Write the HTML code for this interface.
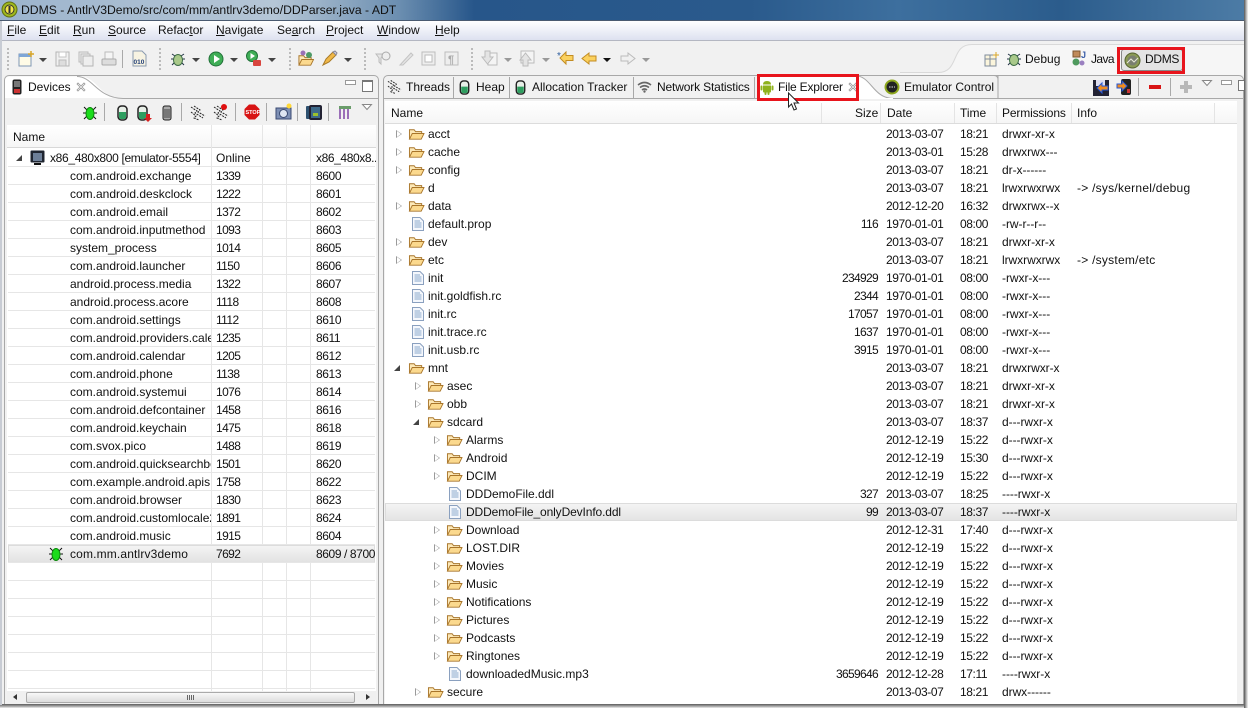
<!DOCTYPE html>
<html><head><meta charset="utf-8"><style>
html,body{margin:0;padding:0;width:1248px;height:708px;overflow:hidden;background:#f0f0f0}
body{font:12px/18px "Liberation Sans",sans-serif;color:#111;position:relative}
div,span,svg,i{position:absolute}
svg{overflow:visible}
u{text-decoration:underline}
.r{left:0;width:1248px;height:18px}
.r span{white-space:nowrap}
.r svg[width="17"]{top:3px;transform:scale(.94)}
.n{left:70px}.o2{left:216px;letter-spacing:-.6px}.o3{left:316px;letter-spacing:-.4px;width:60px;overflow:hidden}
.fn{left:428px}.s{right:370px;letter-spacing:-.67px}.d{left:886px;letter-spacing:-.4px}.t{left:960px;letter-spacing:-.4px}.p{left:1002px;letter-spacing:-.05px}.f{left:1077px;letter-spacing:.25px}
.g{background:#e6e6e6;height:1px;left:8px;width:367px}
.v{background:#e6e6e6;width:1px;top:149px;height:541px}
.sep{background:#a9a9a9;width:1px}
.hs{background:#e4e4e4;width:1px;top:103px;height:20px}
.m{top:21px;line-height:19px;font-size:12px;white-space:nowrap}
.dd{width:0;height:0;border:4px solid transparent;border-top:4px solid #444;border-bottom:0;top:58px}
.dg{border-top-color:#999}
.grip{width:2px;height:22px;top:48px;background:repeating-linear-gradient(#bbb 0 2px,transparent 2px 4px)}
.tb{top:78px;line-height:18px;white-space:nowrap}
.ts{background:#a8a8a8;width:1px;top:77px;height:21px}
.rb{border:3px solid #e8141c;box-sizing:border-box}
.ar{width:0;height:0;top:5px;margin-left:1px;border-left:6px solid #9a9a9a;border-top:4.5px solid transparent;border-bottom:4.5px solid transparent}
.ar::after{content:"";position:absolute;left:-5px;top:-3px;width:0;height:0;border-left:4px solid #fff;border-top:3px solid transparent;border-bottom:3px solid transparent}
.ex{width:0;height:0;top:6px;border-right:6px solid #444;border-top:6px solid transparent}
</style></head><body>
<svg width="0" height="0" style="left:0;top:0"><defs>
<symbol id="fo" viewBox="0 0 17 14"><path d="M1 12V2.500h5l1.500 2H14v2.500" fill="#fde9b8" stroke="#a8752a"/><path d="M1 12.500L4 6.500H16.500L13.500 12.500Z" fill="#fbd98e" stroke="#a8752a"/></symbol>
<symbol id="fi" viewBox="0 0 12 14"><path d="M.5.500H8L11.500 4V13.500H.5Z" fill="#f4f7fc" stroke="#8aa0bf"/><path d="M2.500 4H8M2.500 6H9.500M2.500 8H9.500M2.500 10H9.500" stroke="#8aa8cc"/></symbol>
<symbol id="cy" viewBox="0 0 11 16"><rect x="1" y="1" width="9" height="14" rx="3.500" fill="#e8efe8" stroke="#222" stroke-width="1.500"/><path d="M2 7H9V12Q9 14 7 14H4Q2 14 2 12Z" fill="#2f9e60"/></symbol>
<symbol id="bug" viewBox="0 0 16 16"><path d="M2 2L5 5M14 2L11 5M1 8H4M12 8H15M2 14L5 11M14 14L11 11" stroke="#111"/><ellipse cx="8" cy="8.500" rx="4" ry="6" fill="#1bdc1b" stroke="#0a860a"/></symbol>
<symbol id="dbug" viewBox="0 0 16 16"><path d="M2 3L5 5M14 3L11 5M1 8H4M12 8H15M2 14L5 11M14 14L11 11" stroke="#234"/><ellipse cx="8" cy="9" rx="4.500" ry="5.500" fill="#a9c98a" stroke="#3c6b45"/></symbol>
<symbol id="th" viewBox="0 0 16 16"><path d="M1 2L7 6 5 8 13 13M4 1L10 5 8 7 15 11M1 7L6 11 4 13 9 15" fill="none" stroke="#222" stroke-dasharray="2 1"/></symbol>
<symbol id="and" viewBox="0 0 16 16"><path d="M4 5.500Q4 2 8 2T12 5.500ZM4 6.500H12V12.500Q12 13.500 11 13.500H5Q4 13.500 4 12.500Z" fill="#8fb21c"/><rect x="1.500" y="6.500" width="2" height="5" rx="1" fill="#8fb21c"/><rect x="12.500" y="6.500" width="2" height="5" rx="1" fill="#8fb21c"/><rect x="5.500" y="12" width="2" height="4" rx="1" fill="#8fb21c"/><rect x="8.500" y="12" width="2" height="4" rx="1" fill="#8fb21c"/></symbol>
<symbol id="x" viewBox="0 0 10 10"><path d="M1 2L2 1 5 4 8 1 9 2 6 5 9 8 8 9 5 6 2 9 1 8 4 5Z" fill="#fff" stroke="#999" stroke-width=".8"/></symbol>
</defs></svg>

<!-- title -->
<div style="left:0;top:0;width:1248px;height:20px;background:linear-gradient(90deg,#9cb4cd 0,#b5c6d6 22%,#6b8eb0 32%,#27568a 38%,#2a5a8c 60%,#3d6f9e 72%,#2b5c8c 85%,#4d7ca6 100%)"></div>
<div style="left:0;top:20px;width:1248px;height:1px;background:#4a5a70"></div>
<svg style="left:1px;top:1px" width="17" height="17"><circle cx="8.500" cy="8.500" r="7.500" fill="#9fb81d" stroke="#5f6e10"/><circle cx="8.500" cy="8.500" r="4.500" fill="#f4e64a" stroke="#333"/><rect x="7.500" y="5" width="2" height="7" fill="#333"/></svg>
<div style="left:21px;top:1px;line-height:18px;font-size:12.200px;color:#111;white-space:nowrap">DDMS - AntlrV3Demo/src/com/mm/antlrv3demo/DDParser.java - ADT</div>

<!-- menu -->
<div style="left:0;top:21px;width:1248px;height:20px;background:linear-gradient(#fff,#dde1f0);border-bottom:1px solid #b4b7c2;box-sizing:border-box"></div>
<span class="m" style="left:7px"><u>F</u>ile</span><span class="m" style="left:39px"><u>E</u>dit</span><span class="m" style="left:73px"><u>R</u>un</span><span class="m" style="left:108px"><u>S</u>ource</span><span class="m" style="left:158px">Refac<u>t</u>or</span><span class="m" style="left:216px"><u>N</u>avigate</span><span class="m" style="left:277px">Se<u>a</u>rch</span><span class="m" style="left:326px"><u>P</u>roject</span><span class="m" style="left:377px"><u>W</u>indow</span><span class="m" style="left:435px"><u>H</u>elp</span>

<!-- toolbar -->
<div style="left:0;top:41px;width:1248px;height:34px;background:#f1f1f1"></div>
<div class="grip" style="left:7px"></div><div class="grip" style="left:159px"></div><div class="grip" style="left:289px"></div><div class="grip" style="left:364px"></div><div class="grip" style="left:471px"></div>
<svg style="left:18px;top:51px" width="16" height="16"><rect x="1" y="3" width="12" height="12" fill="#fffbe6" stroke="#7f97b5"/><rect x="1" y="3" width="12" height="3" fill="#7fa6d6"/><path d="M13 0V6M10 3H16" stroke="#d8a528" stroke-width="1.500"/></svg>
<i class="dd" style="left:39px"></i>
<svg style="left:55px;top:51px" width="16" height="16"><rect x="1" y="1" width="13" height="14" fill="#f1f1f1" stroke="#b5b5b5"/><rect x="4" y="1" width="7" height="5" fill="#fff" stroke="#c4c4c4"/><rect x="4" y="9" width="7" height="6" fill="#ddd" stroke="#bbb"/></svg>
<svg style="left:78px;top:51px" width="16" height="16"><rect x="1" y="1" width="9" height="10" fill="#eee" stroke="#bbb"/><rect x="3" y="3" width="9" height="10" fill="#eee" stroke="#bbb"/><rect x="5" y="5" width="10" height="10" fill="#eee" stroke="#b5b5b5"/></svg>
<svg style="left:101px;top:51px" width="16" height="16"><rect x="4" y="1" width="8" height="7" fill="#f5f5f5" stroke="#bbb"/><rect x="1" y="8" width="14" height="6" rx="1" fill="#ddd" stroke="#aaa"/></svg>
<div class="sep" style="left:122px;top:50px;height:18px"></div>
<svg style="left:132px;top:50px" width="15" height="17"><path d="M1 1H10L14 5V16H1Z" fill="#f7f3e2" stroke="#8b9bb0"/><text x="1.500" y="14" font-family="Liberation Sans" font-size="6.500" font-weight="bold" fill="#23407a">010</text></svg>
<svg style="left:170px;top:51px" width="16" height="16"><use href="#dbug"/></svg><i class="dd" style="left:192px"></i>
<svg style="left:208px;top:51px" width="16" height="16"><circle cx="8" cy="8" r="7" fill="#3fae56" stroke="#217038"/><path d="M6 4L12 8 6 12Z" fill="#fff"/></svg><i class="dd" style="left:230px"></i>
<svg style="left:246px;top:50px" width="16" height="17"><circle cx="6" cy="6" r="5.500" fill="#3fae56" stroke="#217038"/><path d="M4.500 3L9 6 4.500 9Z" fill="#fff"/><rect x="7" y="10" width="8" height="6" rx="1" fill="#d8453e"/></svg><i class="dd" style="left:268px"></i>
<svg style="left:298px;top:50px" width="16" height="17"><use href="#fo" y="3" width="16" height="14"/><circle cx="5" cy="3" r="2.500" fill="#9a72b8"/><circle cx="11" cy="5" r="3" fill="#4d9a66"/></svg>
<svg style="left:322px;top:50px" width="16" height="17"><path d="M1 15L4 9 11 2 14 5 7 12Z" fill="#f0b848" stroke="#a87a28"/><path d="M11 2L14 5 15 3 13 1Z" fill="#d8d8e8" stroke="#889"/></svg><i class="dd" style="left:344px"></i>
<svg style="left:375px;top:50px" width="18" height="17"><path d="M1 4H9L6 8V14L4 12V8Z" fill="#e6e6e6" stroke="#bbb"/><circle cx="11" cy="6" r="4" fill="#eee" stroke="#aaa"/></svg>
<svg style="left:398px;top:50px" width="16" height="17"><path d="M2 15L13 3 15 5 5 15Z" fill="#e4e4e4" stroke="#c4c4c4"/></svg>
<svg style="left:421px;top:51px" width="15" height="16"><rect x="1" y="1" width="13" height="13" fill="#eee" stroke="#bdbdbd"/><rect x="4" y="4" width="7" height="7" fill="#fff" stroke="#bbb"/></svg>
<svg style="left:444px;top:51px" width="15" height="16"><rect x="1" y="1" width="13" height="13" fill="#eee" stroke="#bdbdbd"/><text x="4" y="12" font-family="Liberation Sans" font-size="11" font-weight="bold" fill="#aaa">¶</text></svg>
<svg style="left:482px;top:50px" width="17" height="17"><rect x="6" y="3" width="9" height="12" fill="#f4f4f4" stroke="#bbb"/><path d="M3 1H8V7H11L5.500 14 0 7H3Z" fill="#e4e4e4" stroke="#bbb"/></svg><i class="dd dg" style="left:504px"></i>
<svg style="left:520px;top:50px" width="17" height="17"><rect x="1" y="1" width="13" height="12" fill="#f4f4f4" stroke="#bbb"/><path d="M3 16V10H0L5.500 3 11 10H8V16Z" fill="#e4e4e4" stroke="#bbb"/></svg><i class="dd dg" style="left:542px"></i>
<svg style="left:557px;top:51px" width="17" height="14"><path d="M16 4.500H9V1L3 7 9 13V9.500H16Z" fill="#fbd15e" stroke="#c28c22"/><text x="0" y="8" font-family="Liberation Sans" font-size="10" fill="#2f5e9e">*</text></svg>
<svg style="left:581px;top:52px" width="16" height="14"><path d="M15 4H8V1L1 6.500 8 12V9H15Z" fill="#fbd15e" stroke="#c28c22"/></svg><i class="dd" style="left:603px;border-top-color:#111"></i>
<svg style="left:620px;top:52px" width="16" height="14"><path d="M1 4H8V1L15 6.500 8 12V9H1Z" fill="#f0f0f0" stroke="#bbb"/></svg><i class="dd dg" style="left:642px"></i>

<!-- perspective -->
<svg style="left:900px;top:41px" width="348" height="34"><path d="M0 32H38C60 32 50 4 72 4H348V34H0Z" fill="#f6f6f6" stroke="none"/><path d="M0 31.500H38C60 31.500 50 3.500 72 3.500H348" fill="none" stroke="#d9d9d9"/></svg>
<svg style="left:984px;top:52px" width="15" height="15"><rect x="1" y="3" width="11" height="11" fill="#fbf5dc" stroke="#7f8c9c"/><path d="M1 7H12M6 3V14" stroke="#7f8c9c"/><path d="M12 0V6M9 3H15" stroke="#d8a528"/></svg>
<svg style="left:1006px;top:51px" width="16" height="16"><use href="#dbug"/></svg>
<span class="m" style="left:1025px;top:50px">Debug</span>
<svg style="left:1071px;top:50px" width="17" height="17"><rect x="2" y="1" width="7" height="6" fill="#c08a5a" stroke="#7d5530"/><circle cx="5" cy="12" r="3.500" fill="#4f9a5e"/><circle cx="11" cy="13" r="2.500" fill="#9a80c0"/><text x="10" y="8" font-family="Liberation Sans" font-size="9" font-weight="bold" fill="#3c5fa8">J</text></svg>
<span class="m" style="left:1091px;top:50px;letter-spacing:-.6px">Java</span>
<div style="left:1121px;top:49px;width:62px;height:22px;box-sizing:border-box;background:#e4e4e4;border:1px solid #888;border-radius:3px"></div>
<svg style="left:1124px;top:52px" width="17" height="17"><circle cx="8.500" cy="8.500" r="7.500" fill="#8a9a55" stroke="#55622e"/><circle cx="8.500" cy="8.500" r="5" fill="#7a7f70"/><path d="M3 11L7 7 10 10 14 6" stroke="#e8e8d8" fill="none"/></svg>
<span class="m" style="left:1145px;top:50px;letter-spacing:-.3px">DDMS</span>
<div class="rb" style="left:1117px;top:47px;width:68px;height:27px"></div>

<!-- left pane -->
<div style="left:4px;top:75px;width:375px;height:630px;box-sizing:border-box;border:1px solid #a8a8a8;border-radius:5px 5px 0 0;background:#f1f1f1"></div>
<svg style="left:5px;top:76px" width="373" height="24"><path d="M0 22H116C95 22 92 .5 75 .5H5Q0 .5 0 5Z" fill="#fff"/><path d="M72 .5C88 .5 92 22 118 22.500H373" fill="none" stroke="#a8a8a8"/></svg>
<svg style="left:12px;top:79px" width="10" height="16"><rect x=".5" y=".5" width="9" height="15" rx="2" fill="#222"/><rect x="2" y="2" width="6" height="6" fill="#777"/><rect x="2" y="10" width="6" height="4" fill="#c33"/></svg>
<span class="tb" style="left:28px;">Devices</span>
<svg style="left:76px;top:82px" width="10" height="10"><use href="#x"/></svg>
<div style="left:345px;top:80px;width:9px;height:3px;border:1px solid #999;background:#fff"></div>
<div style="left:362px;top:80px;width:9px;height:9px;border:1px solid #777;border-top-width:2px;background:#fff"></div>

<svg style="left:82px;top:105px" width="16" height="16"><use href="#bug"/></svg>
<div class="sep" style="left:104px;top:103px;height:18px"></div>
<svg style="left:117px;top:105px" width="11" height="16"><use href="#cy"/></svg>
<svg style="left:137px;top:105px" width="16" height="17"><use href="#cy" width="11" height="16"/><path d="M9 9H13V13H15L11 17 7 13H9Z" fill="#d81f1f"/></svg>
<svg style="left:162px;top:105px" width="10" height="16"><rect x="1" y="1" width="8" height="14" rx="2" fill="#aaa" stroke="#222"/><path d="M3 4V13M5 4V13M7 4V13" stroke="#444"/></svg>
<div class="sep" style="left:181px;top:103px;height:18px"></div>
<svg style="left:190px;top:105px" width="16" height="16"><use href="#th"/></svg>
<svg style="left:213px;top:103px" width="16" height="18"><use href="#th" y="2" width="16" height="16"/><circle cx="11" cy="4" r="3" fill="#e01010"/></svg>
<div class="sep" style="left:235px;top:103px;height:18px"></div>
<svg style="left:244px;top:104px" width="16" height="16"><path d="M5 .5H11L15.500 5V11L11 15.500H5L.5 11V5Z" fill="#d81414"/><text x="1.500" y="10" font-family="Liberation Sans" font-size="5.500" font-weight="bold" fill="#fff">STOP</text></svg>
<div class="sep" style="left:266px;top:103px;height:18px"></div>
<svg style="left:275px;top:103px" width="17" height="17"><rect x="1" y="5" width="15" height="11" fill="#7d8fb4" stroke="#3a4a72"/><circle cx="8.500" cy="10.500" r="4" fill="#dfe6f2" stroke="#3a4a72"/><circle cx="14" cy="3" r="2.500" fill="#ffd838"/></svg>
<div class="sep" style="left:297px;top:103px;height:18px"></div>
<svg style="left:306px;top:104px" width="16" height="16"><rect x="0" y="2" width="5" height="13" rx="1" fill="#2e5170"/><rect x="3" y="1" width="13" height="15" rx="2" fill="#223"/><rect x="5" y="3" width="9" height="11" fill="#3e6a8a"/><path d="M7 12V9H12V12Z" fill="#9cc22c"/></svg>
<div class="sep" style="left:328px;top:103px;height:18px"></div>
<svg style="left:338px;top:105px" width="14" height="14"><path d="M1 1H13V4H1Z" fill="#6a9c6a"/><path d="M2 4V14M6 4V14M10 4V14" stroke="#9b6fb8" stroke-width="2"/></svg>
<svg style="left:362px;top:104px" width="11" height="7"><path d="M.5.500H9.500L5 5.500Z" fill="#fff" stroke="#888"/></svg>

<!-- device table -->
<div style="left:7px;top:125px;width:369px;height:566px;background:#fff"></div>
<div style="left:7px;top:125px;width:369px;height:23px;background:linear-gradient(#fff,#f6f6f6);border-bottom:1px solid #d8d8d8;box-sizing:border-box"></div>
<span style="left:13px;top:128px">Name</span>
<div class="v" style="left:211px;top:125px;height:566px"></div><div class="v" style="left:262px;top:125px;height:566px"></div><div class="v" style="left:286px;top:125px;height:566px"></div><div class="v" style="left:310px;top:125px;height:566px"></div>
<div style="left:8px;top:545px;width:367px;height:18px;background:linear-gradient(#f4f4f4,#e2e2e2);border:1px solid #dcdcdc;box-sizing:border-box"></div>
<div class="g" style="top:166px"></div><div class="g" style="top:184px"></div><div class="g" style="top:202px"></div><div class="g" style="top:220px"></div><div class="g" style="top:238px"></div><div class="g" style="top:256px"></div><div class="g" style="top:274px"></div><div class="g" style="top:292px"></div><div class="g" style="top:310px"></div><div class="g" style="top:328px"></div><div class="g" style="top:346px"></div><div class="g" style="top:364px"></div><div class="g" style="top:382px"></div><div class="g" style="top:400px"></div><div class="g" style="top:418px"></div><div class="g" style="top:436px"></div><div class="g" style="top:454px"></div><div class="g" style="top:472px"></div><div class="g" style="top:490px"></div><div class="g" style="top:508px"></div><div class="g" style="top:526px"></div><div class="g" style="top:544px"></div><div class="g" style="top:562px"></div><div class="g" style="top:580px"></div><div class="g" style="top:598px"></div><div class="g" style="top:616px"></div><div class="g" style="top:634px"></div><div class="g" style="top:652px"></div><div class="g" style="top:670px"></div><div class="g" style="top:688px"></div>

<div class="r" style="top:149px"><i class="ex" style="left:16px"></i><svg style="left:30px;top:1px" width="15" height="16"><rect x=".5" y=".5" width="14" height="12" rx="1" fill="#1f2530"/><rect x="3" y="3" width="9" height="8" fill="#6d7f98"/><rect x="4" y="13" width="7" height="2" fill="#111"/></svg><span style="left:50px;letter-spacing:-.33px">x86_480x800 [emulator-5554]</span><span class="o2" style="letter-spacing:0">Online</span><span class="o3">x86_480x8...</span></div>
<div class="r" style="top:167px"><span class="n">com.android.exchange</span><span class="o2">1339</span><span class="o3">8600</span></div>
<div class="r" style="top:185px"><span class="n">com.android.deskclock</span><span class="o2">1222</span><span class="o3">8601</span></div>
<div class="r" style="top:203px"><span class="n">com.android.email</span><span class="o2">1372</span><span class="o3">8602</span></div>
<div class="r" style="top:221px"><span class="n" style="width:141px;overflow:hidden">com.android.inputmethod</span><span class="o2">1093</span><span class="o3">8603</span></div>
<div class="r" style="top:239px"><span class="n">system_process</span><span class="o2">1014</span><span class="o3">8605</span></div>
<div class="r" style="top:257px"><span class="n">com.android.launcher</span><span class="o2">1150</span><span class="o3">8606</span></div>
<div class="r" style="top:275px"><span class="n">android.process.media</span><span class="o2">1322</span><span class="o3">8607</span></div>
<div class="r" style="top:293px"><span class="n">android.process.acore</span><span class="o2">1118</span><span class="o3">8608</span></div>
<div class="r" style="top:311px"><span class="n">com.android.settings</span><span class="o2">1112</span><span class="o3">8610</span></div>
<div class="r" style="top:329px"><span class="n" style="width:141px;overflow:hidden">com.android.providers.calendar</span><span class="o2">1235</span><span class="o3">8611</span></div>
<div class="r" style="top:347px"><span class="n">com.android.calendar</span><span class="o2">1205</span><span class="o3">8612</span></div>
<div class="r" style="top:365px"><span class="n">com.android.phone</span><span class="o2">1138</span><span class="o3">8613</span></div>
<div class="r" style="top:383px"><span class="n">com.android.systemui</span><span class="o2">1076</span><span class="o3">8614</span></div>
<div class="r" style="top:401px"><span class="n" style="width:141px;overflow:hidden">com.android.defcontainer</span><span class="o2">1458</span><span class="o3">8616</span></div>
<div class="r" style="top:419px"><span class="n">com.android.keychain</span><span class="o2">1475</span><span class="o3">8618</span></div>
<div class="r" style="top:437px"><span class="n">com.svox.pico</span><span class="o2">1488</span><span class="o3">8619</span></div>
<div class="r" style="top:455px"><span class="n" style="width:141px;overflow:hidden">com.android.quicksearchbox</span><span class="o2">1501</span><span class="o3">8620</span></div>
<div class="r" style="top:473px"><span class="n" style="width:141px;overflow:hidden">com.example.android.apis</span><span class="o2">1758</span><span class="o3">8622</span></div>
<div class="r" style="top:491px"><span class="n">com.android.browser</span><span class="o2">1830</span><span class="o3">8623</span></div>
<div class="r" style="top:509px"><span class="n" style="width:141px;overflow:hidden">com.android.customlocale2</span><span class="o2">1891</span><span class="o3">8624</span></div>
<div class="r" style="top:527px"><span class="n">com.android.music</span><span class="o2">1915</span><span class="o3">8604</span></div>
<div class="r" style="top:545px"><svg style="left:48px;top:1px" width="16" height="16"><use href="#bug"/></svg><span class="n" style="letter-spacing:.15px">com.mm.antlrv3demo</span><span class="o2">7692</span><span class="o3">8609 / 8700</span></div>

<!-- left scrollbar -->
<div style="left:7px;top:691px;width:369px;height:13px;background:#f0f0f0"></div>
<div style="left:26px;top:692px;width:329px;height:11px;box-sizing:border-box;border:1px solid #aaa;border-radius:2px;background:linear-gradient(#f8f8f8,#dcdcdc)"></div>
<div style="left:187px;top:695px;width:7px;height:5px;background:repeating-linear-gradient(90deg,#666 0 1px,transparent 1px 2px)"></div>
<div style="left:13px;top:694px;width:0;height:0;border:3px solid transparent;border-right:4px solid #333;border-left:0"></div>
<div style="left:366px;top:694px;width:0;height:0;border:3px solid transparent;border-left:4px solid #333;border-right:0"></div>

<!-- right pane -->
<div style="left:383px;top:75px;width:861px;height:630px;box-sizing:border-box;border:1px solid #a8a8a8;border-radius:5px 5px 0 0;background:#f1f1f1"></div>
<svg style="left:754px;top:75px" width="265" height="25"><path d="M3 0H100C118 0 118 23 136 23H3Z" fill="#fff"/><path d="M100 .5C118 .5 118 23.500 140 23.500H244V23" fill="none" stroke="#a8a8a8"/><path d="M244 5Q244 .5 240 .5H115" fill="none" stroke="#a8a8a8"/><path d="M244 .5V23" stroke="#a8a8a8"/></svg>
<div style="left:384px;top:98px;width:859px;height:1px;background:#a8a8a8"></div>
<div style="left:757px;top:98px;width:136px;height:1px;background:#fff"></div>
<div class="ts" style="left:453px"></div><div class="ts" style="left:509px"></div><div class="ts" style="left:633px"></div><div class="ts" style="left:754px"></div>
<svg style="left:387px;top:79px" width="15" height="16"><use href="#th"/></svg><span class="tb" style="left:406px">Threads</span>
<svg style="left:459px;top:80px" width="11" height="15"><use href="#cy"/></svg><span class="tb" style="left:476px">Heap</span>
<svg style="left:515px;top:80px" width="11" height="15"><use href="#cy"/></svg><span class="tb" style="left:532px">Allocation Tracker</span>
<svg style="left:637px;top:81px" width="15" height="12"><path d="M1 4Q7.500-1 14 4M3 6.500Q7.500 3 12 6.500M5 9Q7.500 7 10 9" stroke="#666" stroke-width="1.600" fill="none"/><circle cx="7.500" cy="10.500" r="1.200" fill="#666"/></svg><span class="tb" style="left:657px;letter-spacing:-.15px">Network Statistics</span>
<svg style="left:759px;top:79px" width="16" height="16"><use href="#and"/></svg><span class="tb" style="left:778px;letter-spacing:-.2px">File Explorer</span>
<svg style="left:848px;top:82px" width="10" height="10"><use href="#x"/></svg>
<svg style="left:884px;top:79px" width="16" height="16"><circle cx="8" cy="8" r="7.500" fill="#8fa81e"/><circle cx="8" cy="8" r="5.500" fill="#222"/><path d="M5 8H11" stroke="#ddd" stroke-dasharray="1.500 1"/></svg><span class="tb" style="left:904px">Emulator Control</span>

<svg style="left:1093px;top:80px" width="16" height="16"><rect x="0" y="0" width="16" height="16" fill="#223"/><rect x="3" y="0" width="9" height="6" fill="#dde"/><path d="M15 6H9V3L4 8 9 13V10H15Z" fill="#f28c1c" stroke="#2356d8"/></svg>
<svg style="left:1116px;top:79px" width="15" height="17"><rect x="5" y="0" width="10" height="16" rx="2" fill="#222"/><rect x="11" y="10" width="3" height="4" fill="#c33"/><path d="M1 5H6V2L11 7 6 12V9H1Z" fill="#f28c1c" stroke="#2356d8"/></svg>
<div class="sep" style="left:1138px;top:78px;height:18px"></div>
<div style="left:1149px;top:85px;width:12px;height:4px;background:#d81414"></div>
<div class="sep" style="left:1170px;top:78px;height:18px"></div>
<svg style="left:1180px;top:81px" width="12" height="12"><path d="M4 0H8V4H12V8H8V12H4V8H0V4H4Z" fill="#b8b8b8"/></svg>
<svg style="left:1202px;top:80px" width="11" height="7"><path d="M.5.500H9.500L5 5.500Z" fill="#fff" stroke="#888"/></svg>
<div style="left:1221px;top:80px;width:9px;height:3px;border:1px solid #999;background:#fff"></div>
<div style="left:1238px;top:80px;width:5px;height:9px;border:1px solid #777;border-right:0;background:#fff"></div>

<!-- file table -->
<div style="left:385px;top:101px;width:852px;height:603px;background:#fff"></div>
<div style="left:385px;top:101px;width:852px;height:23px;background:linear-gradient(#fff,#f6f6f6);border-bottom:1px solid #dcdcdc;box-sizing:border-box"></div>
<div class="hs" style="left:821px"></div><div class="hs" style="left:880px"></div><div class="hs" style="left:954px"></div><div class="hs" style="left:996px"></div><div class="hs" style="left:1071px"></div><div class="hs" style="left:1214px"></div>
<span style="left:391px;top:104px">Name</span><span style="left:855px;top:104px">Size</span><span style="left:887px;top:104px">Date</span><span style="left:960px;top:104px">Time</span><span style="left:1002px;top:104px;letter-spacing:-.15px">Permissions</span><span style="left:1077px;top:104px">Info</span>
<div style="left:385px;top:503px;width:852px;height:18px;background:linear-gradient(#f4f4f4,#e4e4e4);border:1px solid #dcdcdc;box-sizing:border-box"></div>

<div class="r" style="top:125px"><i class="ar" style="left:395px"></i><svg style="left:408px;top:2px" width="17" height="14"><use href="#fo"/></svg><span class="fn">acct</span><span class="d">2013-03-07</span><span class="t">18:21</span><span class="p">drwxr-xr-x</span></div>
<div class="r" style="top:143px"><i class="ar" style="left:395px"></i><svg style="left:408px;top:2px" width="17" height="14"><use href="#fo"/></svg><span class="fn">cache</span><span class="d">2013-03-01</span><span class="t">15:28</span><span class="p">drwxrwx---</span></div>
<div class="r" style="top:161px"><i class="ar" style="left:395px"></i><svg style="left:408px;top:2px" width="17" height="14"><use href="#fo"/></svg><span class="fn">config</span><span class="d">2013-03-07</span><span class="t">18:21</span><span class="p">dr-x------</span></div>
<div class="r" style="top:179px"><svg style="left:408px;top:2px" width="17" height="14"><use href="#fo"/></svg><span class="fn">d</span><span class="d">2013-03-07</span><span class="t">18:21</span><span class="p">lrwxrwxrwx</span><span class="f">-&gt; /sys/kernel/debug</span></div>
<div class="r" style="top:197px"><i class="ar" style="left:395px"></i><svg style="left:408px;top:2px" width="17" height="14"><use href="#fo"/></svg><span class="fn">data</span><span class="d">2012-12-20</span><span class="t">16:32</span><span class="p">drwxrwx--x</span></div>
<div class="r" style="top:215px"><svg style="left:412px;top:2px" width="12" height="14"><use href="#fi"/></svg><span class="fn">default.prop</span><span class="s">116</span><span class="d">1970-01-01</span><span class="t">08:00</span><span class="p">-rw-r--r--</span></div>
<div class="r" style="top:233px"><i class="ar" style="left:395px"></i><svg style="left:408px;top:2px" width="17" height="14"><use href="#fo"/></svg><span class="fn">dev</span><span class="d">2013-03-07</span><span class="t">18:21</span><span class="p">drwxr-xr-x</span></div>
<div class="r" style="top:251px"><i class="ar" style="left:395px"></i><svg style="left:408px;top:2px" width="17" height="14"><use href="#fo"/></svg><span class="fn">etc</span><span class="d">2013-03-07</span><span class="t">18:21</span><span class="p">lrwxrwxrwx</span><span class="f">-&gt; /system/etc</span></div>
<div class="r" style="top:269px"><svg style="left:412px;top:2px" width="12" height="14"><use href="#fi"/></svg><span class="fn">init</span><span class="s">234929</span><span class="d">1970-01-01</span><span class="t">08:00</span><span class="p">-rwxr-x---</span></div>
<div class="r" style="top:287px"><svg style="left:412px;top:2px" width="12" height="14"><use href="#fi"/></svg><span class="fn">init.goldfish.rc</span><span class="s">2344</span><span class="d">1970-01-01</span><span class="t">08:00</span><span class="p">-rwxr-x---</span></div>
<div class="r" style="top:305px"><svg style="left:412px;top:2px" width="12" height="14"><use href="#fi"/></svg><span class="fn">init.rc</span><span class="s">17057</span><span class="d">1970-01-01</span><span class="t">08:00</span><span class="p">-rwxr-x---</span></div>
<div class="r" style="top:323px"><svg style="left:412px;top:2px" width="12" height="14"><use href="#fi"/></svg><span class="fn">init.trace.rc</span><span class="s">1637</span><span class="d">1970-01-01</span><span class="t">08:00</span><span class="p">-rwxr-x---</span></div>
<div class="r" style="top:341px"><svg style="left:412px;top:2px" width="12" height="14"><use href="#fi"/></svg><span class="fn">init.usb.rc</span><span class="s">3915</span><span class="d">1970-01-01</span><span class="t">08:00</span><span class="p">-rwxr-x---</span></div>
<div class="r" style="top:359px"><i class="ex" style="left:394px"></i><svg style="left:408px;top:2px" width="17" height="14"><use href="#fo"/></svg><span class="fn">mnt</span><span class="d">2013-03-07</span><span class="t">18:21</span><span class="p">drwxrwxr-x</span></div>
<div class="r" style="top:377px"><i class="ar" style="left:414px"></i><svg style="left:427px;top:2px" width="17" height="14"><use href="#fo"/></svg><span style="left:447px">asec</span><span class="d">2013-03-07</span><span class="t">18:21</span><span class="p">drwxr-xr-x</span></div>
<div class="r" style="top:395px"><i class="ar" style="left:414px"></i><svg style="left:427px;top:2px" width="17" height="14"><use href="#fo"/></svg><span style="left:447px">obb</span><span class="d">2013-03-07</span><span class="t">18:21</span><span class="p">drwxr-xr-x</span></div>
<div class="r" style="top:413px"><i class="ex" style="left:413px"></i><svg style="left:427px;top:2px" width="17" height="14"><use href="#fo"/></svg><span style="left:447px">sdcard</span><span class="d">2013-03-07</span><span class="t">18:37</span><span class="p">d---rwxr-x</span></div>
<div class="r" style="top:431px"><i class="ar" style="left:433px"></i><svg style="left:446px;top:2px" width="17" height="14"><use href="#fo"/></svg><span style="left:466px">Alarms</span><span class="d">2012-12-19</span><span class="t">15:22</span><span class="p">d---rwxr-x</span></div>
<div class="r" style="top:449px"><i class="ar" style="left:433px"></i><svg style="left:446px;top:2px" width="17" height="14"><use href="#fo"/></svg><span style="left:466px">Android</span><span class="d">2012-12-19</span><span class="t">15:30</span><span class="p">d---rwxr-x</span></div>
<div class="r" style="top:467px"><i class="ar" style="left:433px"></i><svg style="left:446px;top:2px" width="17" height="14"><use href="#fo"/></svg><span style="left:466px">DCIM</span><span class="d">2012-12-19</span><span class="t">15:22</span><span class="p">d---rwxr-x</span></div>
<div class="r" style="top:485px"><svg style="left:449px;top:2px" width="12" height="14"><use href="#fi"/></svg><span style="left:466px">DDDemoFile.ddl</span><span class="s">327</span><span class="d">2013-03-07</span><span class="t">18:25</span><span class="p">----rwxr-x</span></div>
<div class="r" style="top:503px"><svg style="left:449px;top:2px" width="12" height="14"><use href="#fi"/></svg><span style="left:466px;letter-spacing:-.12px">DDDemoFile_onlyDevInfo.ddl</span><span class="s">99</span><span class="d">2013-03-07</span><span class="t">18:37</span><span class="p">----rwxr-x</span></div>
<div class="r" style="top:521px"><i class="ar" style="left:433px"></i><svg style="left:446px;top:2px" width="17" height="14"><use href="#fo"/></svg><span style="left:466px">Download</span><span class="d">2012-12-31</span><span class="t">17:40</span><span class="p">d---rwxr-x</span></div>
<div class="r" style="top:539px"><i class="ar" style="left:433px"></i><svg style="left:446px;top:2px" width="17" height="14"><use href="#fo"/></svg><span style="left:466px">LOST.DIR</span><span class="d">2012-12-19</span><span class="t">15:22</span><span class="p">d---rwxr-x</span></div>
<div class="r" style="top:557px"><i class="ar" style="left:433px"></i><svg style="left:446px;top:2px" width="17" height="14"><use href="#fo"/></svg><span style="left:466px">Movies</span><span class="d">2012-12-19</span><span class="t">15:22</span><span class="p">d---rwxr-x</span></div>
<div class="r" style="top:575px"><i class="ar" style="left:433px"></i><svg style="left:446px;top:2px" width="17" height="14"><use href="#fo"/></svg><span style="left:466px">Music</span><span class="d">2012-12-19</span><span class="t">15:22</span><span class="p">d---rwxr-x</span></div>
<div class="r" style="top:593px"><i class="ar" style="left:433px"></i><svg style="left:446px;top:2px" width="17" height="14"><use href="#fo"/></svg><span style="left:466px">Notifications</span><span class="d">2012-12-19</span><span class="t">15:22</span><span class="p">d---rwxr-x</span></div>
<div class="r" style="top:611px"><i class="ar" style="left:433px"></i><svg style="left:446px;top:2px" width="17" height="14"><use href="#fo"/></svg><span style="left:466px">Pictures</span><span class="d">2012-12-19</span><span class="t">15:22</span><span class="p">d---rwxr-x</span></div>
<div class="r" style="top:629px"><i class="ar" style="left:433px"></i><svg style="left:446px;top:2px" width="17" height="14"><use href="#fo"/></svg><span style="left:466px">Podcasts</span><span class="d">2012-12-19</span><span class="t">15:22</span><span class="p">d---rwxr-x</span></div>
<div class="r" style="top:647px"><i class="ar" style="left:433px"></i><svg style="left:446px;top:2px" width="17" height="14"><use href="#fo"/></svg><span style="left:466px">Ringtones</span><span class="d">2012-12-19</span><span class="t">15:22</span><span class="p">d---rwxr-x</span></div>
<div class="r" style="top:665px"><svg style="left:449px;top:2px" width="12" height="14"><use href="#fi"/></svg><span style="left:466px">downloadedMusic.mp3</span><span class="s">3659646</span><span class="d">2012-12-28</span><span class="t">17:11</span><span class="p">----rwxr-x</span></div>
<div class="r" style="top:683px"><i class="ar" style="left:414px"></i><svg style="left:427px;top:2px" width="17" height="14"><use href="#fo"/></svg><span style="left:447px">secure</span><span class="d">2013-03-07</span><span class="t">18:21</span><span class="p">drwx------</span></div>

<!-- annotation overlays -->
<div class="rb" style="left:757px;top:74px;width:102px;height:27px"></div>
<svg style="left:787px;top:92px" width="13" height="20"><path d="M1.500 1V15L4.500 12 7 18 9.500 17 7 11H11.500Z" fill="#fff" stroke="#222"/></svg>

<!-- window shadow -->
<div style="left:0;top:704px;width:1248px;height:4px;background:linear-gradient(#5a5a5a,#aaa 60%,#eee)"></div>
<div style="left:1244px;top:0;width:4px;height:708px;background:linear-gradient(90deg,#555,#bbb 60%,#f4f4f4)"></div>
<div style="left:0;top:21px;width:2px;height:684px;background:#c8ccd4"></div>
</body></html>
